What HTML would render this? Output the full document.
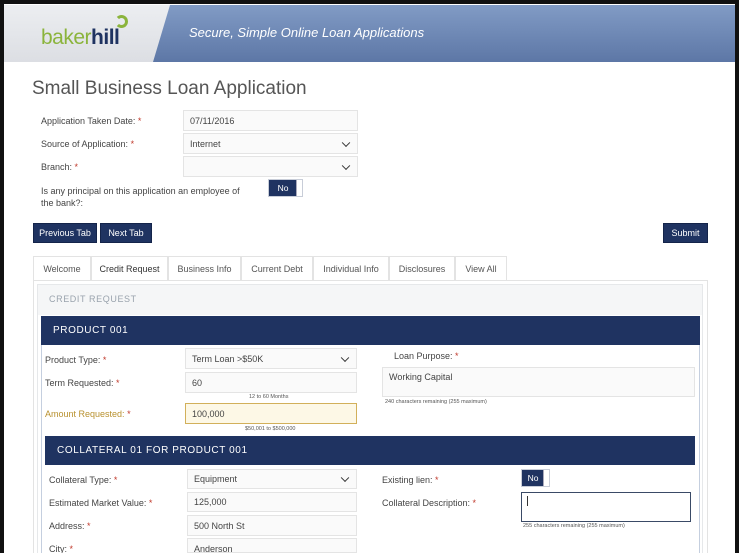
<!DOCTYPE html>
<html><head><meta charset="utf-8"><style>
*{box-sizing:border-box;margin:0;padding:0}
body{width:739px;height:553px;overflow:hidden;background:#111;font-family:"Liberation Sans",sans-serif;position:relative}
#page{position:absolute;left:4px;top:4px;width:731px;height:549px;background:#fff;overflow:hidden}
.a{position:absolute}
.hdr{left:0;top:1px;width:731px;height:57px;background:linear-gradient(#819bc5,#5d77a6)}
.logo{left:0;top:1px;width:170px;height:57px;background:linear-gradient(#eceef1,#dcdee3);clip-path:polygon(0 0,166px 0,149px 57px,0 57px)}
.lbl{font-size:9px;color:#444}
.r{color:#c0392b}
.in{background:#fafafa;border:1px solid #e4e4e4;font-size:9px;color:#444;padding:0 6px;display:flex;align-items:center}
.sel::after{content:"";position:absolute;right:8px;top:50%;width:5px;height:5px;border-right:1.6px solid #333;border-bottom:1.6px solid #333;transform:translateY(-70%) rotate(45deg)}
.btn{background:#1f3361;color:#fff;font-size:9px;display:flex;align-items:center;justify-content:center;border:1px solid #14244a}
.tab{top:252px;height:24px;border:1px solid #e3e3e3;border-bottom:none;font-size:9px;color:#555;display:flex;align-items:center;justify-content:center;background:#fff}
.hint{font-size:5.5px;color:#555}
.bar{background:#1f3361;color:#fff;font-size:10px;letter-spacing:.6px;display:flex;align-items:center;padding-left:12px}
.tg{background:#1f3361;color:#fff;font-size:8.5px;border:1px solid #c8cdd8}
.tg span{position:absolute;left:0;top:0;bottom:0;width:28px;display:flex;align-items:center;justify-content:center}
.tg i{position:absolute;right:0;top:0;bottom:0;width:6px;background:#fff;border-left:1px solid #aab}
</style></head><body><div id="page">
<div class="a hdr"></div>
<div class="a logo"></div>
<div class="a" style="left:37px;top:22px;font-size:21px;letter-spacing:-.5px;color:#8bb43c">baker<b style="color:#1f3361">hill</b></div>
<div class="a" style="left:111px;top:11px;width:13px;height:13px;border:3px solid #8bb43c;border-radius:50%;border-left-color:transparent"></div>
<div class="a" style="left:185px;top:21px;font-size:13px;font-style:italic;color:#fff">Secure, Simple Online Loan Applications</div>

<div class="a" style="left:28px;top:74px;font-size:19px;color:#555">Small Business Loan Application</div>
<div class="a lbl" style="left:37px;top:112px">Application Taken Date: <span class="r">*</span></div>
<div class="a in" style="left:179px;top:106px;width:175px;height:21px">07/11/2016</div>
<div class="a lbl" style="left:37px;top:135px">Source of Application: <span class="r">*</span></div>
<div class="a in sel" style="left:179px;top:129px;width:175px;height:21px">Internet</div>
<div class="a lbl" style="left:37px;top:158px">Branch: <span class="r">*</span></div>
<div class="a in sel" style="left:179px;top:152px;width:175px;height:21px"></div>
<div class="a lbl" style="left:37px;top:181px;width:210px;line-height:12px">Is any principal on this application an employee of the bank?:</div>
<div class="a tg" style="left:264px;top:175px;width:35px;height:18px"><span>No</span><i></i></div>

<div class="a btn" style="left:29px;top:219px;width:64px;height:20px">Previous Tab</div>
<div class="a btn" style="left:96px;top:219px;width:52px;height:20px">Next Tab</div>
<div class="a btn" style="left:659px;top:219px;width:45px;height:20px">Submit</div>

<div class="a tab" style="left:29px;width:58px">Welcome</div>
<div class="a tab" style="left:87px;width:77px;color:#333;height:25px">Credit Request</div>
<div class="a tab" style="left:164px;width:73px">Business Info</div>
<div class="a tab" style="left:237px;width:72px">Current Debt</div>
<div class="a tab" style="left:309px;width:76px">Individual Info</div>
<div class="a tab" style="left:385px;width:66px">Disclosures</div>
<div class="a tab" style="left:451px;width:52px">View All</div>

<div class="a" style="left:29px;top:276px;width:675px;height:273px;border:1px solid #e3e3e3;border-bottom:none"></div>
<div class="a" style="left:33px;top:280px;width:666px;height:269px;border:1px solid #e6e8ea;border-bottom:none;background:#fff"></div>
<div class="a" style="left:34px;top:281px;width:664px;height:30px;background:#f5f6f7"></div>
<div class="a" style="left:45px;top:290px;font-size:9px;letter-spacing:.6px;color:#9aa3ad">CREDIT REQUEST</div>
<div class="a" style="left:37px;top:312px;width:659px;height:237px;border:1px solid #c5cfdf;border-bottom:none"></div>
<div class="a bar" style="left:37px;top:312px;width:659px;height:29px">PRODUCT 001</div>

<div class="a lbl" style="left:41px;top:351px">Product Type: <span class="r">*</span></div>
<div class="a in sel" style="left:181px;top:344px;width:172px;height:21px">Term Loan &gt;$50K</div>
<div class="a lbl" style="left:41px;top:374px">Term Requested: <span class="r">*</span></div>
<div class="a in" style="left:181px;top:368px;width:172px;height:21px">60</div>
<div class="a hint" style="left:245px;top:390px">12 to 60 Months</div>
<div class="a lbl" style="left:41px;top:405px;color:#b8912f">Amount Requested: <span class="r">*</span></div>
<div class="a in" style="left:181px;top:399px;width:172px;height:21px;background:#fdf8e6;border-color:#d2b05a">100,000</div>
<div class="a hint" style="left:241px;top:422px">$50,001 to $500,000</div>
<div class="a lbl" style="left:390px;top:347px">Loan Purpose: <span class="r">*</span></div>
<div class="a in" style="left:378px;top:363px;width:313px;height:30px;align-items:flex-start;padding-top:4px">Working Capital</div>
<div class="a hint" style="left:381px;top:395px">240 characters remaining (255 maximum)</div>

<div class="a bar" style="left:41px;top:432px;width:650px;height:29px">COLLATERAL 01 FOR PRODUCT 001</div>
<div class="a lbl" style="left:45px;top:471px">Collateral Type: <span class="r">*</span></div>
<div class="a in sel" style="left:183px;top:465px;width:170px;height:20px">Equipment</div>
<div class="a lbl" style="left:45px;top:494px">Estimated Market Value: <span class="r">*</span></div>
<div class="a in" style="left:183px;top:488px;width:170px;height:20px">125,000</div>
<div class="a lbl" style="left:45px;top:517px">Address: <span class="r">*</span></div>
<div class="a in" style="left:183px;top:511px;width:170px;height:21px">500 North St</div>
<div class="a lbl" style="left:45px;top:540px">City: <span class="r">*</span></div>
<div class="a in" style="left:183px;top:534px;width:170px;height:15px;align-items:flex-start;padding-top:5px">Anderson</div>
<div class="a lbl" style="left:378px;top:471px">Existing lien: <span class="r">*</span></div>
<div class="a tg" style="left:517px;top:465px;width:29px;height:18px"><span style="width:22px">No</span><i></i></div>
<div class="a lbl" style="left:378px;top:494px">Collateral Description: <span class="r">*</span></div>
<div class="a" style="left:517px;top:488px;width:170px;height:30px;border:1.5px solid #3a4a66;background:#fff"><div style="position:absolute;left:5px;top:3px;width:1px;height:10px;background:#333"></div></div>
<div class="a hint" style="left:519px;top:519px">255 characters remaining (255 maximum)</div>
</div></body></html>
